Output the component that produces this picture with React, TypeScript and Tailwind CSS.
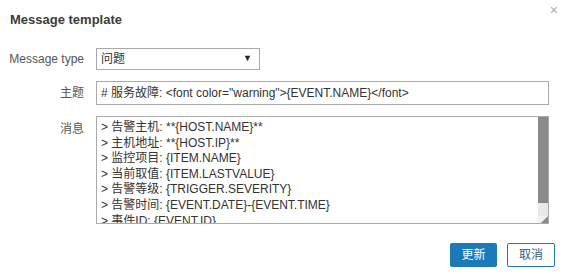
import React from "react";

const font = { fontFamily: '"Liberation Sans", Arial, "Noto Sans CJK SC", sans-serif' };

const lines = [
  "> 告警主机: **{HOST.NAME}**",
  "> 主机地址: **{HOST.IP}**",
  "> 监控项目: {ITEM.NAME}",
  "> 当前取值: {ITEM.LASTVALUE}",
  "> 告警等级: {TRIGGER.SEVERITY}",
  "> 告警时间: {EVENT.DATE}-{EVENT.TIME}",
  "> 事件ID: {EVENT.ID}",
];

export default function App() {
  return (
    <div style={font} className="w-[565px] h-[274px] bg-white relative text-[12px] text-[#555]">
      <div className="absolute right-[7px] top-[3px] text-[#aaa] text-[14px] leading-[14px]">×</div>
      <div className="pl-[10px] pt-[12px] text-[13px] leading-[16px] font-bold text-[#3c3c3c]">Message template</div>
      <div className="mt-[20px] flex flex-col gap-[11px]">
        <div className="flex items-center">
          <div className="w-[85px] text-right pr-[1px]">Message type</div>
          <div className="ml-[11px] w-[164px] h-[22px] border border-[#aaa] flex items-center justify-between pl-[4px] pr-[7px] text-[#333]">
            <span>问题</span>
            <span className="text-[9px] text-[#222]">▼</span>
          </div>
        </div>
        <div className="flex items-center">
          <div className="w-[85px] text-right pr-[1px]">主题</div>
          <div className="ml-[11px] w-[453px] h-[24px] border border-[#aaa] flex items-center pl-[4px] text-[#333] whitespace-nowrap overflow-hidden">
            {'# 服务故障: <font color="warning">{EVENT.NAME}</font>'}
          </div>
        </div>
        <div className="flex items-start">
          <div className="w-[85px] text-right pr-[1px] pt-[4px]">消息</div>
          <div className="ml-[11px] w-[453px] h-[108px] border border-[#aaa] flex overflow-hidden">
            <div className="flex-1 pl-[4px] pt-[3px] leading-[15.6px] text-[#333] overflow-hidden whitespace-nowrap">
              {lines.map((l) => (
                <div key={l}>{l}</div>
              ))}
            </div>
            <div className="w-[10px] flex flex-col">
              <div className="h-[86px] bg-[#8a8a8a]" />
              <div className="flex-1 bg-[#e8e8e8]" />
              <div className="h-[7px] bg-[#f0f0f0] text-[7px] leading-[7px] text-[#888] text-right">◢</div>
            </div>
          </div>
        </div>
      </div>
      <div className="mt-[19px] flex justify-end gap-[10px] pr-[10px]">
        <div className="w-[47px] h-[24px] rounded-[2px] bg-[#1c7ab8] text-white flex items-center justify-center text-[12px]">更新</div>
        <div className="w-[48px] h-[24px] rounded-[2px] border border-[#1c7ab8] bg-white text-[#2a5d8a] flex items-center justify-center text-[12px]">取消</div>
      </div>
    </div>
  );
}
